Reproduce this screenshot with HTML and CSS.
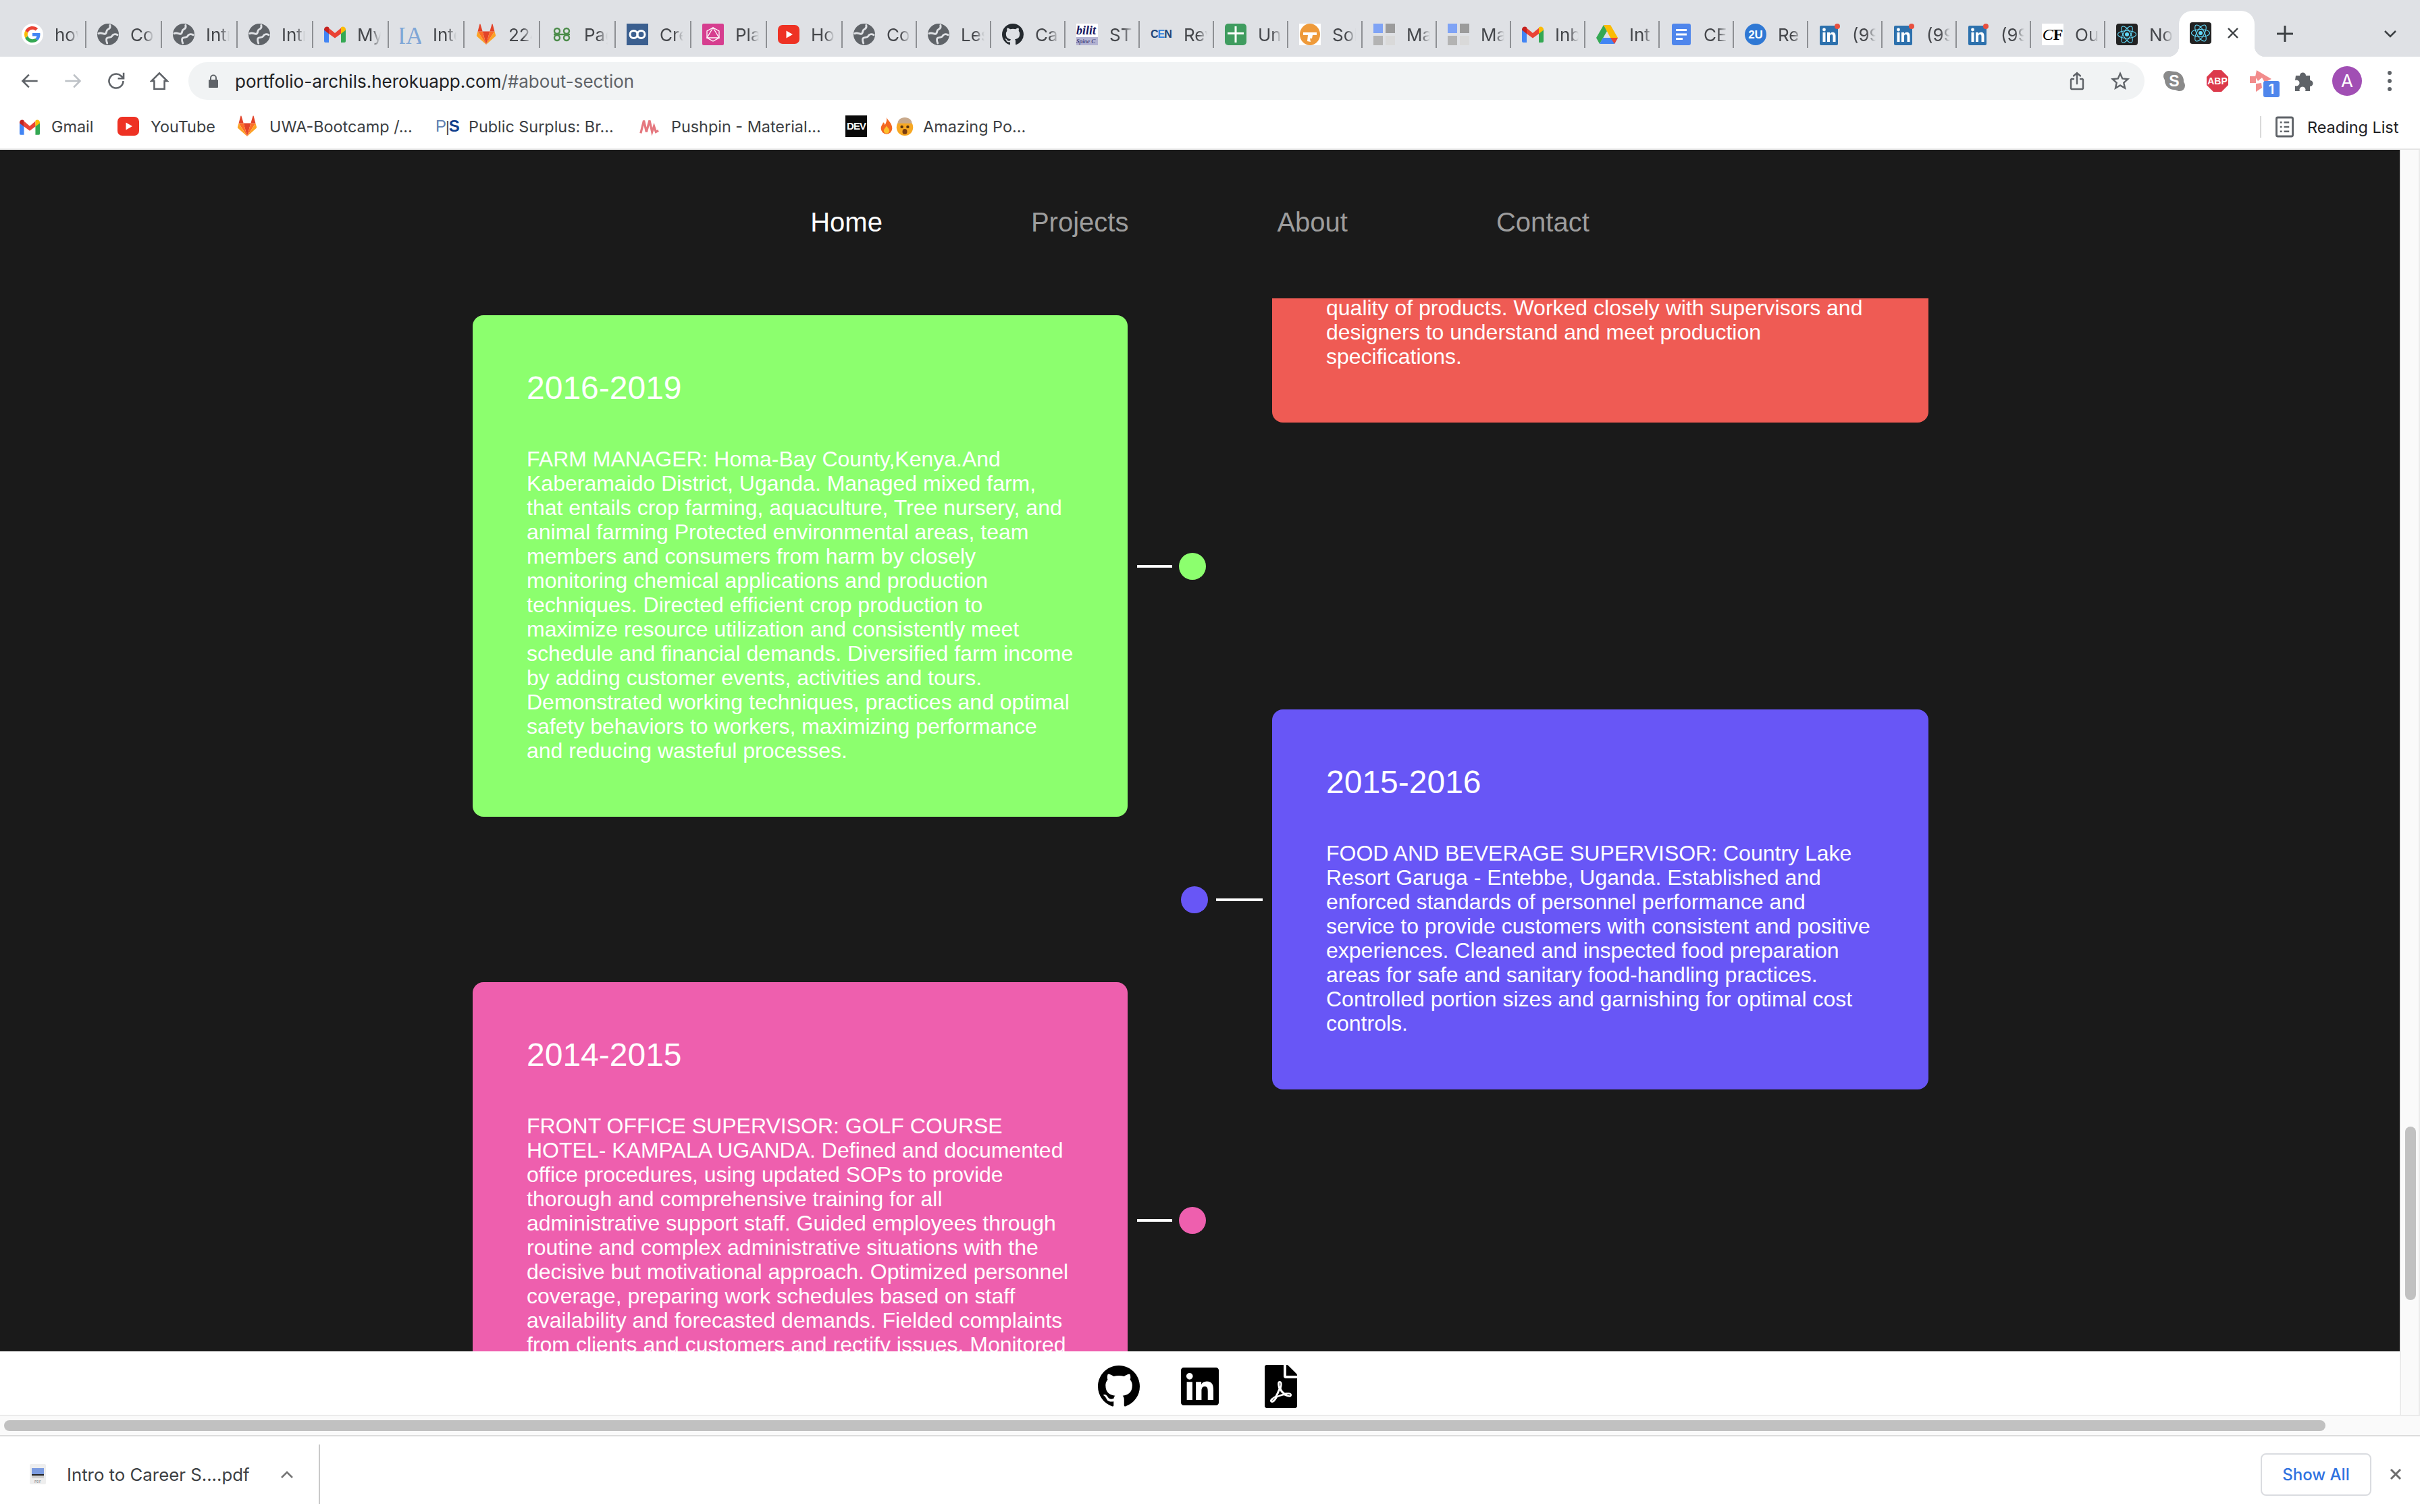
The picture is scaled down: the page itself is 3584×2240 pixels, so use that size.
FILE: index.html
```html
<!DOCTYPE html>
<html lang="en">
<head>
    <meta charset="UTF-8">
    <meta name="viewport" content="width=device-width, initial-scale=1.0">
    <title>Portfolio</title>
    <link rel="stylesheet" href="styles.css">
</head>
<body>
    <svg class="defs" width="0" height="0">
        <symbol id="i-google" viewBox="-8 -8 64 64">
            <circle cx="24" cy="24" r="32" fill="#fff"/>
            <path fill="#EA4335" d="M24 9.5c3.54 0 6.71 1.22 9.21 3.6l6.85-6.85C35.9 2.38 30.47 0 24 0 14.62 0 6.51 5.38 2.56 13.22l7.98 6.19C12.43 13.72 17.74 9.5 24 9.5z"/>
            <path fill="#4285F4" d="M46.98 24.55c0-1.57-.15-3.09-.38-4.55H24v9.02h12.94c-.58 2.96-2.26 5.48-4.78 7.18l7.73 6c4.51-4.18 7.09-10.36 7.09-17.65z"/>
            <path fill="#FBBC05" d="M10.53 28.59c-.48-1.45-.76-2.99-.76-4.59s.27-3.14.76-4.59l-7.98-6.19C.92 16.46 0 20.12 0 24c0 3.88.92 7.54 2.56 10.78l7.97-6.19z"/>
            <path fill="#34A853" d="M24 48c6.48 0 11.93-2.13 15.89-5.81l-7.73-6c-2.15 1.45-4.92 2.3-8.16 2.3-6.26 0-11.57-4.22-13.47-9.91l-7.98 6.19C6.51 42.62 14.62 48 24 48z"/>
        </symbol>
        <symbol id="i-globe" viewBox="0 0 24 24">
            <circle cx="12" cy="12" r="12" fill="currentColor"/>
            <path fill="none" stroke="#dfe1e5" stroke-width="2.2" stroke-linecap="round" d="M1.5 11c3-1.500 5 .8 7 .4 2.800-.6.600-3.700 3.400-5 2-.9 2.800-2.400 2.200-4.600"/>
            <path fill="none" stroke="#dfe1e5" stroke-width="2.200" stroke-linecap="round" d="M22.500 12.500c-2.500-1.200-5-.8-6 1.200-1 2.200-3.500 1-5.500 2.300-1.200.8-1.200 2.600 0 5.800"/>
        </symbol>
        <symbol id="i-gmail" viewBox="0 0 32 24">
            <path fill="#4285f4" d="M0 4v18a2 2 0 0 0 2 2h5V8z"/>
            <path fill="#34a853" d="M25 8v16h5a2 2 0 0 0 2-2V4z"/>
            <path fill="#ea4335" d="M7 2.500 16 10l9-7.500V11l-9 6.500L7 11z"/>
            <path fill="#c5221f" d="M0 4.500C0 1 4.200-1 7 1.500V11L0 5.500z"/>
            <path fill="#fbbc04" d="M25 1.500C27.800-1 32 1 32 4.500v1L25 11z"/>
        </symbol>
        <symbol id="i-gitlab" viewBox="0 0 32 36">
            <path fill="#e24329" d="M16 35 10 13h12z"/>
            <path fill="#fc6d26" d="M16 35 10 13H2z"/>
            <path fill="#fca326" d="M2 13 .2 19c-.3 1 .1 2 .9 2.600L16 35z"/>
            <path fill="#e24329" d="M2 13h8L6.500 1c-.2-.7-1.200-.7-1.400 0z"/>
            <path fill="#fc6d26" d="M16 35l6-22h8z"/>
            <path fill="#fca326" d="M30 13l1.800 6c.3 1-.1 2-.9 2.600L16 35z"/>
            <path fill="#e24329" d="M30 13h-8L25.500 1c.2-.7 1.200-.7 1.400 0z"/>
        </symbol>
        <symbol id="i-youtube" viewBox="0 0 32 32">
            <rect y="2" width="32" height="28" rx="7" fill="#ee3224"/>
            <path fill="#fff" d="M12.500 10.500 22 16l-9.500 5.500z"/>
        </symbol>
        <symbol id="i-github" viewBox="0 0 16 16">
            <path fill="currentColor" d="M8 0C3.58 0 0 3.58 0 8c0 3.540 2.290 6.530 5.470 7.590.4.070.55-.17.55-.38 0-.19-.01-.82-.01-1.490-2.010.37-2.530-.49-2.690-.94-.09-.23-.48-.94-.82-1.130-.28-.15-.68-.52-.01-.53.63-.01 1.080.58 1.230.82.72 1.210 1.870.87 2.330.66.07-.52.28-.87.51-1.070-1.780-.2-3.640-.89-3.640-3.950 0-.87.31-1.590.82-2.150-.08-.2-.36-1.020.08-2.120 0 0 .67-.21 2.200.82.64-.18 1.320-.27 2-.27.68 0 1.360.09 2 .27 1.530-1.040 2.200-.82 2.200-.82.44 1.100.16 1.920.08 2.120.51.56.82 1.270.82 2.150 0 3.070-1.870 3.750-3.650 3.950.29.25.54.73.54 1.480 0 1.070-.01 1.930-.01 2.200 0 .21.15.46.55.38A8.013 8.013 0 0016 8c0-4.420-3.580-8-8-8z"/>
        </symbol>
        <symbol id="i-linkedin" viewBox="0 0 32 32">
            <rect x="1" y="3" width="27" height="29" rx="2" fill="#2d71ad"/>
            <rect x="5.500" y="13" width="4" height="14" fill="#fff"/>
            <circle cx="7.500" cy="9" r="2.400" fill="#fff"/>
            <path fill="#fff" d="M12 13h4v2c1-1.500 2.400-2.300 4-2.300 3.300 0 4.500 2.200 4.500 5.300v9h-4v-8c0-1.700-.5-3-2.200-3-1.800 0-2.300 1.300-2.300 3v8h-4z"/>
            <circle cx="27" cy="4" r="4" fill="#e8503f"/>
        </symbol>
        <symbol id="i-grid" viewBox="0 0 32 32">
            <rect width="14" height="14" fill="#7fa3f5"/>
            <rect x="18" width="14" height="14" fill="#9b9b9b"/>
            <rect y="18" width="14" height="14" fill="#b3b3b3"/>
            <rect x="18" y="18" width="14" height="14" fill="#d9d9d9"/>
        </symbol>
        <symbol id="i-react" viewBox="0 0 32 32">
            <rect width="32" height="32" rx="4" fill="#222"/>
            <circle cx="16" cy="16" r="3" fill="#61dafb"/>
            <g fill="none" stroke="#61dafb" stroke-width="1.100">
                <ellipse cx="16" cy="16" rx="13.500" ry="5.500"/>
                <ellipse cx="16" cy="16" rx="13.500" ry="5.500" transform="rotate(60 16 16)"/>
                <ellipse cx="16" cy="16" rx="13.500" ry="5.500" transform="rotate(120 16 16)"/>
            </g>
        </symbol>
    </svg>

    <div class="tabstrip">
        <div class="tab tab-wide"><svg class="fav"><use href="#i-google"/></svg><span class="tab-title">how</span></div>
        <div class="tab tab-wide"><svg class="fav globe"><use href="#i-globe"/></svg><span class="tab-title">Cor</span></div>
        <div class="tab tab-wide"><svg class="fav globe"><use href="#i-globe"/></svg><span class="tab-title">Intr</span></div>
        <div class="tab tab-wide"><svg class="fav globe"><use href="#i-globe"/></svg><span class="tab-title">Intr</span></div>
        <div class="tab tab-wide"><svg class="fav"><use href="#i-gmail"/></svg><span class="tab-title">My</span></div>
        <div class="tab tab-wide"><svg class="fav" viewBox="0 0 32 32"><text x="16" y="30" class="fav-ia">IA</text></svg><span class="tab-title">Inte</span></div>
        <div class="tab tab-wide"><svg class="fav"><use href="#i-gitlab"/></svg><span class="tab-title">224</span></div>
        <div class="tab tab-wide"><svg class="fav" viewBox="0 0 32 32"><g fill="none" stroke="#4c8c4a" stroke-width="2.400"><circle cx="9" cy="11" r="4"/><circle cx="23" cy="11" r="4"/><circle cx="9" cy="21" r="4"/><circle cx="23" cy="21" r="4"/><path d="M4 16h24"/></g></svg><span class="tab-title">Pag</span></div>
        <div class="tab tab-wide"><svg class="fav" viewBox="0 0 32 32"><rect width="32" height="32" fill="#3b5f8f"/><g fill="none" stroke="#fff" stroke-width="3"><circle cx="10.500" cy="16" r="5.500"/><circle cx="21.500" cy="16" r="5.500"/></g></svg><span class="tab-title">Cre</span></div>
        <div class="tab tab-wide"><svg class="fav" viewBox="0 0 32 32"><rect width="32" height="32" rx="2" fill="#d63e8f"/><g fill="none" stroke="#fff" stroke-width="1.300"><path d="M16 6 25 21H7z"/><path d="M16 6 7 11v10l9 5 9-5V11z"/></g></svg><span class="tab-title">Pla</span></div>
        <div class="tab tab-wide"><svg class="fav"><use href="#i-youtube"/></svg><span class="tab-title">Hov</span></div>
        <div class="tab"><svg class="fav globe"><use href="#i-globe"/></svg><span class="tab-title">Co</span></div>
        <div class="tab"><svg class="fav globe"><use href="#i-globe"/></svg><span class="tab-title">Les</span></div>
        <div class="tab"><svg class="fav gh" viewBox="0 0 16 16"><use href="#i-github"/></svg><span class="tab-title">Ca</span></div>
        <div class="tab"><div class="fav fav-ability"><span class="ability-top">bilit</span><span class="ability-bot">Spine C</span></div><span class="tab-title">ST</span></div>
        <div class="tab"><span class="fav fav-cen">C<b>E</b>N</span><span class="tab-title">Rev</span></div>
        <div class="tab"><svg class="fav" viewBox="0 0 32 32"><rect width="32" height="32" rx="5" fill="#3f9c5f"/><path fill="#fff" d="M14.500 4h3v9H28v3H17.500v12h-3V16H4v-3h10.500z"/></svg><span class="tab-title">Un</span></div>
        <div class="tab"><svg class="fav" viewBox="0 0 32 32"><rect width="32" height="32" fill="#fff"/><ellipse cx="16" cy="16" rx="15" ry="16" fill="#ee9a3a"/><path fill="#fff" d="M6 13h20v4h-6l-1 5h-3l1 5-5-1 1-9H6z"/></svg><span class="tab-title">Sol</span></div>
        <div class="tab"><svg class="fav"><use href="#i-grid"/></svg><span class="tab-title">Ma</span></div>
        <div class="tab"><svg class="fav"><use href="#i-grid"/></svg><span class="tab-title">Ma</span></div>
        <div class="tab"><svg class="fav"><use href="#i-gmail"/></svg><span class="tab-title">Inb</span></div>
        <div class="tab"><svg class="fav" viewBox="0 0 32 28"><path fill="#34a853" d="M11 0 0 19l5 9L16 9z"/><path fill="#fbbc04" d="M11 0h10l11 19H21z"/><path fill="#4285f4" d="M32 19H10L5 28h22z"/><path fill="#ea4335" d="M32 19H21l6 9z"/></svg><span class="tab-title">Int</span></div>
        <div class="tab"><svg class="fav" viewBox="0 0 32 32"><rect x="2" width="28" height="32" rx="3" fill="#4f86ec"/><path fill="#fff" d="M8 8h16v3H8zM8 14.500h16v3H8zM8 21h10v3H8z"/></svg><span class="tab-title">CE</span></div>
        <div class="tab"><svg class="fav" viewBox="0 0 32 32"><circle cx="16" cy="16" r="16" fill="#2f78d4"/><text x="16" y="22" class="fav-2u">2U</text></svg><span class="tab-title">Re</span></div>
        <div class="tab"><svg class="fav"><use href="#i-linkedin"/></svg><span class="tab-title">(99</span></div>
        <div class="tab"><svg class="fav"><use href="#i-linkedin"/></svg><span class="tab-title">(99</span></div>
        <div class="tab"><svg class="fav"><use href="#i-linkedin"/></svg><span class="tab-title">(99</span></div>
        <div class="tab"><span class="fav fav-cf"><i>C</i><b>F</b></span><span class="tab-title">Ou</span></div>
        <div class="tab tab-last"><svg class="fav"><use href="#i-react"/></svg><span class="tab-title">No</span></div>
        <div class="tab-active">
            <svg class="fav"><use href="#i-react"/></svg>
            <svg class="tab-close" viewBox="0 0 16 16"><path d="M1 1l14 14M15 1 1 15"/></svg>
        </div>
        <svg class="new-tab" viewBox="0 0 24 24"><path d="M12 1v22M1 12h22"/></svg>
        <svg class="tab-menu" viewBox="0 0 18 12"><path d="M1 2l8 8 8-8"/></svg>
    </div>

    <div class="toolbar">
        <div class="nav-buttons">
            <svg class="tool" viewBox="0 0 24 24"><path d="M22 12H3M11 4l-8 8 8 8"/></svg>
            <svg class="tool tool-off" viewBox="0 0 24 24"><path d="M2 12h19M13 4l8 8-8 8"/></svg>
            <svg class="tool" viewBox="0 0 24 24"><path d="M21 12a9 9 0 1 1-3-6.700L21 8M21.500 1.500v7.300h-7.300"/></svg>
            <svg class="tool" viewBox="0 0 24 24"><path d="M12 2 2 12h3.500v10h13V12H22z"/></svg>
        </div>
        <div class="omnibox">
            <svg class="lock" viewBox="0 0 16 20"><path fill="#5f6368" d="M3 8V5.500a5 5 0 0 1 10 0V8h1a1 1 0 0 1 1 1v10a1 1 0 0 1-1 1H2a1 1 0 0 1-1-1V9a1 1 0 0 1 1-1zm2 0h6V5.500a3 3 0 0 0-6 0z"/></svg>
            <span class="url">portfolio-archils.herokuapp.com<span class="url-path">/#about-section</span></span>
            <svg class="omni-icon" viewBox="0 0 24 28"><path d="M7 11H4a1.500 1.500 0 0 0-1 1v13a1.500 1.500 0 0 0 1 1h16a1.500 1.500 0 0 0 1-1V12a1.500 1.500 0 0 0-1-1h-3M12 18V2M7 6.500 12 2l5 4.500"/></svg>
            <svg class="omni-icon omni-star" viewBox="0 0 28 28"><path d="M14 3l3.300 7.400 8 .8-6 5.400 1.700 7.900-7-4-7 4 1.700-7.900-6-5.400 8-.8z"/></svg>
        </div>
        <div class="extensions">
            <svg class="ext" viewBox="0 0 32 32"><path fill="#8a8a8a" d="M16 2a14 14 0 0 1 14 15c0 1 2 2 2 6a8 8 0 0 1-8 8c-4 0-5-2-8-2A14 14 0 0 1 2 15c0-1-2-3-2-6a8 8 0 0 1 8-8c3 0 5 1 8 1z"/><text x="16" y="24" class="ext-s">S</text></svg>
            <svg class="ext" viewBox="0 0 32 32"><path fill="#dc3a4b" d="M10 0h12l10 10v12L22 32H10L0 22V10z"/><text x="16" y="21" class="ext-abp">ABP</text></svg>
            <div class="ext ext-badged">
                <svg viewBox="0 0 32 32"><path fill="#f28c8c" d="M10 0 32 13 22 18l-4-7-6 5-4-6zM0 9h9v10H0zM9 20l8-1 1 7-9 6z"/></svg>
                <span class="badge">1</span>
            </div>
            <svg class="ext" viewBox="0 0 32 32"><path fill="#5f6368" d="M4 8h6a4.500 4.500 0 1 1 9 0h6v7a4.500 4.500 0 1 1 0 9v7h-7a4.500 4.500 0 1 0-8 0H3v-8a4.500 4.500 0 1 0 0-8z"/></svg>
            <div class="avatar">A</div>
            <div class="kebab"><i></i><i></i><i></i></div>
        </div>
    </div>

    <div class="bookmarks">
        <a class="bookmark bm-gmail"><svg class="bm-icon"><use href="#i-gmail"/></svg>Gmail</a>
        <a class="bookmark bm-yt"><svg class="bm-icon"><use href="#i-youtube"/></svg>YouTube</a>
        <a class="bookmark bm-lab"><svg class="bm-icon"><use href="#i-gitlab"/></svg>UWA-Bootcamp /...</a>
        <a class="bookmark bm-ps"><span class="bm-icon ps-icon">P<i>|</i><b>S</b></span>Public Surplus: Br...</a>
        <a class="bookmark bm-pin"><svg class="bm-icon" viewBox="0 0 32 32"><path fill="none" stroke="#e5787f" stroke-width="3.500" d="M2 27 7 7l4 18 5-18 4 18 3-9 3 9 4-2"/></svg>Pushpin - Material...</a>
        <a class="bookmark bm-dev"><span class="bm-icon dev-icon">DEV</span>
            <svg class="emoji emoji-fire" viewBox="0 0 24 32"><path fill="#f4671f" d="M12 0c2 6 10 10 10 20a10 10 0 0 1-20 0c0-5 3-7 4-11 2 1 3 3 3 5 2-4 4-8 3-14z"/><path fill="#fbc02d" d="M12 15c1 3 5 5 5 9a5 5 0 0 1-10 0c0-3 3-5 5-9z"/></svg>
            <svg class="emoji emoji-head" viewBox="0 0 32 32"><circle cx="16" cy="18" r="14" fill="#f7a823"/><path fill="#c8a98c" d="M4 11c0-6 5-10 12-10s12 4 12 10z"/><circle cx="11" cy="17" r="2.500" fill="#5a3310"/><circle cx="21" cy="17" r="2.500" fill="#5a3310"/><ellipse cx="16" cy="25" rx="4" ry="4.500" fill="#7a3d10"/></svg>
            Amazing Po...</a>
        <div class="reading-list">
            <svg class="reading-icon" viewBox="0 0 28 32"><rect x="1.500" y="1.500" width="25" height="29" rx="2" fill="none" stroke="#5f6368" stroke-width="3"/><path stroke="#5f6368" stroke-width="2.500" d="M7 9h3M13 9h8M7 16h3M13 16h8M7 23h3M13 23h8"/></svg>
            Reading List
        </div>
    </div>

    <div class="viewport">
        <div class="page">
            <nav class="site-nav">
                <a class="active">Home</a>
                <a>Projects</a>
                <a>About</a>
                <a>Contact</a>
            </nav>
            <main class="timeline">
                <div class="timeline-inner">
                    <div class="row row-right row-first">
                        <article class="card card-red card-cut">
                            <p>quality of products. Worked closely with supervisors and designers to understand and meet production specifications.</p>
                        </article>
                    </div>
                    <div class="row row-left">
                        <article class="card card-green">
                            <h3>2016-2019</h3>
                            <p>FARM MANAGER: Homa-Bay County,Kenya.And Kaberamaido District, Uganda. Managed mixed farm, that entails crop farming, aquaculture, Tree nursery, and animal farming Protected environmental areas, team members and consumers from harm by closely monitoring chemical applications and production techniques. Directed efficient crop production to maximize resource utilization and consistently meet schedule and financial demands. Diversified farm income by adding customer events, activities and tours. Demonstrated working techniques, practices and optimal safety behaviors to workers, maximizing performance and reducing wasteful processes.</p>
                        </article>
                        <span class="stem"></span>
                        <span class="dot dot-green"></span>
                    </div>
                    <div class="row row-right">
                        <span class="dot dot-purple"></span>
                        <span class="stem stem-right"></span>
                        <article class="card card-purple">
                            <h3>2015-2016</h3>
                            <p>FOOD AND BEVERAGE SUPERVISOR: Country Lake Resort Garuga - Entebbe, Uganda. Established and enforced standards of personnel performance and service to provide customers with consistent and positive experiences. Cleaned and inspected food preparation areas for safe and sanitary food-handling practices. Controlled portion sizes and garnishing for optimal cost controls.</p>
                        </article>
                    </div>
                    <div class="row row-left">
                        <article class="card card-pink">
                            <h3>2014-2015</h3>
                            <p>FRONT OFFICE SUPERVISOR: GOLF COURSE HOTEL- KAMPALA UGANDA. Defined and documented office procedures, using updated SOPs to provide thorough and comprehensive training for all administrative support staff. Guided employees through routine and complex administrative situations with the decisive but motivational approach. Optimized personnel coverage, preparing work schedules based on staff availability and forecasted demands. Fielded complaints from clients and customers and rectify issues. Monitored</p>
                        </article>
                        <span class="stem"></span>
                        <span class="dot dot-pink"></span>
                    </div>
                </div>
            </main>
            <footer class="site-footer">
                <a class="social"><svg class="social-gh" viewBox="0 0 16 16"><use href="#i-github"/></svg></a>
                <a class="social"><svg class="social-in" viewBox="0 32 448 448"><path d="M416 32H31.900C14.300 32 0 46.500 0 64.300v383.400C0 465.500 14.300 480 31.900 480H416c17.600 0 32-14.500 32-32.300V64.300c0-17.800-14.400-32.300-32-32.300zM135.400 416H69V202.200h66.500V416zm-33.200-243c-21.300 0-38.500-17.300-38.500-38.500S80.900 96 102.200 96c21.200 0 38.500 17.300 38.500 38.500 0 21.300-17.200 38.500-38.500 38.500zm282.100 243h-66.400V312c0-24.800-.5-56.700-34.500-56.700-34.600 0-39.900 27-39.900 54.900V416h-66.400V202.200h63.700v29.200h.9c8.900-16.800 30.600-34.500 62.900-34.500 67.200 0 79.700 44.300 79.700 101.900V416z"/></svg></a>
                <a class="social"><svg class="social-pdf" viewBox="0 0 384 512"><path d="M181.900 256.100c-5-16-4.900-46.900-2-46.900 8.400 0 7.600 36.900 2 46.900zm-1.700 47.200c-7.700 20.200-17.300 43.300-28.400 62.700 18.300-7 39-17.200 62.900-21.900-12.700-9.600-24.900-23.400-34.500-40.800zM86.100 428.100c0 .8 13.200-5.400 34.900-40.200-6.700 6.300-29.100 24.500-34.900 40.200zM248 160h136v328c0 13.300-10.700 24-24 24H24c-13.300 0-24-10.700-24-24V24C0 10.700 10.700 0 24 0h200v136c0 13.200 10.800 24 24 24zm-8 171.800c-20-12.200-33.300-29-42.700-53.800 4.500-18.500 11.600-46.600 6.200-64.200-4.700-29.400-42.400-26.500-47.800-6.800-5 18.300-.4 44.100 8.100 77-11.600 27.600-28.700 64.600-40.800 85.800-.1 0-.1.1-.2.1-27.100 13.900-73.600 44.500-54.500 68 5.600 6.900 16 10 21.500 10 17.900 0 35.700-18 61.100-61.800 25.800-8.500 54.100-19.100 79-23.200 21.700 11.800 47.100 19.500 64 19.500 29.200 0 31.200-32 19.700-43.400-13.900-13.600-54.300-9.700-73.600-7.200zM377 105L279 7c-4.500-4.500-10.600-7-17-7h-6v128h128v-6.100c0-6.300-2.500-12.400-7-16.900zm-74.100 255.300c4.100-2.700-2.500-11.900-42.800-9 37.100 15.800 42.800 9 42.800 9z"/></svg></a>
            </footer>
        </div>
        <div class="vscroll"><div class="vscroll-thumb"></div></div>
    </div>
    <div class="hscroll"><div class="hscroll-thumb"></div></div>

    <div class="downloads">
        <div class="download-item">
            <div class="pdf-file"><span class="pdf-thumb"></span><span class="pdf-label">PDF</span></div>
            <span class="download-name">Intro to Career S....pdf</span>
            <svg class="download-caret" viewBox="0 0 20 12"><path d="M2 11l8-8 8 8"/></svg>
        </div>
        <button class="show-all">Show All</button>
        <svg class="download-close" viewBox="0 0 18 18"><path d="M2 2l14 14M16 2 2 16"/></svg>
    </div>
</body>
</html>
```

FILE: styles.css
```css
* {
    box-sizing: border-box;
}
html, body {
    margin: 0;
    padding: 0;
    height: 2240px;
    overflow: hidden;
}
body {
    display: flex;
    flex-direction: column;
    font-family: 'Inter', 'Liberation Sans', sans-serif;
    background: #fff;
}
.defs {
    position: absolute;
}

/* tab strip */
.tabstrip {
    height: 84px;
    flex: none;
    display: flex;
    padding: 16px 0 0 16px;
    background: #dfe1e5;
    position: relative;
}
.tab {
    width: 110px;
    height: 40px;
    margin-top: 15px;
    flex: none;
    display: flex;
    align-items: center;
    border-right: 2px solid #8e9094;
    padding-left: 16px;
    font-size: 26px;
    color: #45474b;
}
.tab-wide {
    width: 112px;
}
.tab-last {
    width: 109px;
    border-right: none;
}
.fav {
    width: 32px;
    height: 32px;
    flex: none;
    margin-right: 17px;
    overflow: hidden;
}
.tab-title {
    width: 35px;
    overflow: hidden;
    white-space: nowrap;
    -webkit-mask-image: linear-gradient(to right, #000 60%, transparent);
    mask-image: linear-gradient(to right, #000 60%, transparent);
}
.globe {
    color: #5f6368;
}
.gh {
    color: #24292e;
}
.fav-ia {
    font: 36px 'Liberation Serif', serif;
    fill: #7fa6d6;
    text-anchor: middle;
}
.fav-2u {
    font: bold 17px 'Liberation Sans', sans-serif;
    fill: #fff;
    text-anchor: middle;
}
.fav-ability {
    display: flex;
    flex-direction: column;
    background: #fff;
    font-family: 'Liberation Serif', serif;
    font-style: italic;
    color: #17175f;
    white-space: nowrap;
}
.ability-top {
    height: 20px;
    font-size: 18px;
    font-weight: bold;
    line-height: 20px;
}
.ability-bot {
    height: 12px;
    font-size: 9px;
    line-height: 12px;
    background: #b3b3d2;
}
.fav-cen {
    font: bold 16px/32px 'Liberation Sans', sans-serif;
    color: #1d4478;
    letter-spacing: -1px;
    white-space: nowrap;
}
.fav-cen b {
    color: #2f80e0;
}
.fav-cf {
    background: #fff;
    color: #000;
    font: 24px/32px 'Liberation Serif', serif;
    text-align: center;
    white-space: nowrap;
}
.tab-active {
    position: relative;
    width: 112px;
    height: 68px;
    flex: none;
    display: flex;
    align-items: center;
    padding: 0 0 2px 16px;
    background: #fff;
    border-radius: 20px 20px 0 0;
}
.tab-active::before,
.tab-active::after {
    content: "";
    position: absolute;
    bottom: 0;
    width: 16px;
    height: 16px;
}
.tab-active::before {
    left: -16px;
    background: radial-gradient(circle at 0 0, transparent 16px, #fff 16.500px);
}
.tab-active::after {
    right: -16px;
    background: radial-gradient(circle at 100% 0, transparent 16px, #fff 16.500px);
}
.tab-active .fav {
    margin-right: 24px;
}
.tab-close {
    width: 16px;
    height: 16px;
    fill: none;
    stroke: #3c4043;
    stroke-width: 2.400;
}
.new-tab {
    position: absolute;
    left: 3372px;
    top: 38px;
    width: 24px;
    height: 24px;
    fill: none;
    stroke: #3c4043;
    stroke-width: 3;
    stroke-linecap: round;
}
.tab-menu {
    position: absolute;
    left: 3531px;
    top: 44px;
    width: 18px;
    height: 12px;
    fill: none;
    stroke: #3c4043;
    stroke-width: 2.500;
}

/* toolbar */
.toolbar {
    height: 72px;
    flex: none;
    display: flex;
    align-items: flex-start;
    padding-top: 8px;
    background: #fff;
}
.nav-buttons {
    width: 279px;
    flex: none;
    height: 56px;
    display: flex;
    align-items: center;
    padding-left: 30px;
    gap: 36px;
}
.tool {
    width: 28px;
    height: 28px;
    fill: none;
    stroke: #5f6368;
    stroke-width: 2.200;
}
.tool-off {
    stroke: #bdc1c6;
}
.omnibox {
    width: 2897px;
    height: 56px;
    flex: none;
    display: flex;
    align-items: center;
    background: #f1f3f4;
    border-radius: 28px;
    padding-left: 29px;
}
.lock {
    width: 16px;
    height: 20px;
    margin-right: 24px;
}
.url {
    flex: 1;
    font-size: 26px;
    color: #202124;
    white-space: nowrap;
}
.url-path {
    color: #5f6368;
}
.omni-icon {
    width: 24px;
    height: 28px;
    margin-right: 37px;
    fill: none;
    stroke: #5f6368;
    stroke-width: 2.400;
    stroke-linecap: round;
}
.omni-star {
    width: 30px;
    margin-right: 21px;
}
.extensions {
    height: 56px;
    display: flex;
    align-items: center;
    padding-left: 28px;
    gap: 32px;
}
.ext {
    width: 32px;
    height: 32px;
    flex: none;
}
.ext-s {
    font: bold 23px 'Liberation Sans', sans-serif;
    fill: #fff;
    text-anchor: middle;
}
.ext-abp {
    font: bold 14px 'Liberation Sans', sans-serif;
    fill: #fff;
    text-anchor: middle;
}
.ext-badged {
    position: relative;
}
.badge {
    position: absolute;
    left: 20px;
    top: 16px;
    width: 24px;
    height: 24px;
    background: #4f86ec;
    border-radius: 3px;
    color: #fff;
    font-size: 20px;
    font-weight: 600;
    line-height: 24px;
    text-align: center;
}
.avatar {
    width: 44px;
    height: 44px;
    flex: none;
    margin-left: -6px;
    border-radius: 50%;
    background: #a14fb4;
    color: #fff;
    font-size: 26px;
    line-height: 44px;
    text-align: center;
}
.kebab {
    display: flex;
    flex-direction: column;
    gap: 6px;
    margin-left: -6px;
    padding-left: 12px;
}
.kebab i {
    width: 6px;
    height: 6px;
    border-radius: 50%;
    background: #5f6368;
}

/* bookmarks */
.bookmarks {
    height: 66px;
    flex: none;
    display: flex;
    align-items: center;
    padding: 0 0 2px 29px;
    background: #fff;
    border-bottom: 2px solid #e4e4e4;
    font-size: 23.4px;
    color: #3c4043;
}
.bookmark {
    display: flex;
    align-items: center;
    flex: none;
    white-space: nowrap;
}
.bm-gmail {
    width: 145px;
}
.bm-yt {
    width: 176px;
}
.bm-lab {
    width: 295px;
}
.bm-ps {
    width: 302px;
}
.bm-pin {
    width: 305px;
}
.bm-icon {
    width: 32px;
    height: 32px;
    margin-right: 17px;
    flex: none;
}
.bm-gmail .bm-icon {
    width: 30px;
    height: 23px;
    margin-top: 2px;
}
.bm-pin .bm-icon {
    width: 30px;
}
.ps-icon {
    font: 24px/32px 'Liberation Sans', sans-serif;
    color: #5f7fb0;
    white-space: nowrap;
    letter-spacing: -1px;
}
.ps-icon i {
    font-style: normal;
    color: #444;
    font-size: 22px;
}
.ps-icon b {
    color: #123f8c;
}
.dev-icon {
    background: #0a0a0a;
    color: #fff;
    font: bold 15px/32px 'Liberation Sans', sans-serif;
    letter-spacing: -1px;
    text-align: center;
    margin-right: 19px;
}
.emoji {
    height: 32px;
    flex: none;
}
.emoji-fire {
    width: 20px;
    margin-right: 3px;
}
.emoji-head {
    width: 28px;
    margin-right: 13px;
}
.reading-list {
    position: absolute;
    left: 3347px;
    top: 172px;
    height: 32px;
    display: flex;
    align-items: center;
    padding-left: 21px;
    border-left: 2px solid #d9d9d9;
    color: #202124;
    white-space: nowrap;
}
.reading-icon {
    width: 27px;
    height: 32px;
    margin-right: 20px;
}

/* page area */
.viewport {
    height: 1874px;
    flex: none;
    display: flex;
}
.page {
    width: 3554px;
    flex: none;
    display: flex;
    flex-direction: column;
    background: #1a1a1a;
}
.site-nav {
    height: 220px;
    flex: none;
    display: flex;
    justify-content: center;
    align-items: center;
    gap: 220px;
    padding-bottom: 5px;
    font-family: 'Liberation Sans', sans-serif;
    font-size: 40px;
    color: #9d9d9d;
}
.site-nav .active {
    color: #fff;
}
.timeline {
    flex: 1;
    overflow: hidden;
    min-height: 0;
}
.timeline-inner {
    width: 2156px;
    margin-left: 700px;
    font-family: 'Liberation Sans', sans-serif;
    color: #fff;
}
.row {
    display: flex;
    align-items: center;
    margin-top: -159px;
}
.row-right {
    justify-content: flex-end;
}
.row-right .card {
    width: 972px;
}
.row-first {
    margin-top: -4px;
}
.card {
    width: 970px;
    flex: none;
    padding: 80px;
    border-radius: 16px;
}
.card h3 {
    margin: 0 0 60px;
    font-size: 48px;
    font-weight: 400;
    line-height: 55px;
}
.card p {
    margin: 0;
    font-size: 32px;
    line-height: 36px;
}
.card-cut {
    padding-top: 0;
    border-radius: 0 0 16px 16px;
}
.card-red {
    background: #ef5b54;
}
.card-green {
    background: #8cff6e;
}
.card-purple {
    background: #6856f6;
}
.card-pink {
    background: #ee5fae;
    min-height: 706px;
}
.stem {
    width: 52px;
    height: 4px;
    margin: 0 10px 0 14px;
    background: #fff;
}
.stem-right {
    width: 69px;
    margin: 0 14px 0 12px;
}
.dot {
    width: 40px;
    height: 40px;
    border-radius: 50%;
}
.dot-green {
    background: #8cff6e;
}
.dot-purple {
    background: #6856f6;
}
.dot-pink {
    background: #ee5fae;
}
.site-footer {
    height: 94px;
    flex: none;
    display: flex;
    justify-content: center;
    align-items: center;
    padding-top: 9px;
    background: #fff;
}
.social {
    width: 120px;
    display: flex;
    justify-content: center;
    color: #000;
}
.social-gh {
    width: 62px;
    height: 62px;
}
.social-in {
    width: 56px;
    height: 56px;
}
.social-pdf {
    width: 48px;
    height: 64px;
}
.vscroll {
    flex: 1;
    background: #fafafa;
    border-left: 2px solid #ebebeb;
    border-right: 2px solid #ebebeb;
    padding: 1447px 4px 0 6px;
}
.vscroll-thumb {
    height: 257px;
    background: #c1c1c1;
    border-radius: 8px;
}
.hscroll {
    height: 32px;
    flex: none;
    padding: 8px 0 0 6px;
    background: #fafafa;
    border-top: 2px solid #ebebeb;
    border-bottom: 2px solid #dcdcdc;
}
.hscroll-thumb {
    width: 3438px;
    height: 16px;
    margin-top: -2px;
    background: #c1c1c1;
    border-radius: 8px;
}

/* download shelf */
.downloads {
    height: 112px;
    flex: none;
    display: flex;
    align-items: center;
    background: #fff;
}
.download-item {
    width: 474px;
    height: 88px;
    flex: none;
    display: flex;
    align-items: center;
    padding-left: 44px;
    border-right: 2px solid #cacaca;
}
.pdf-file {
    width: 24px;
    height: 30px;
    flex: none;
    display: flex;
    flex-direction: column;
    align-items: center;
    padding-top: 6px;
    background: #eeeeee;
    border-radius: 2px;
    margin-right: 31px;
}
.pdf-thumb {
    width: 18px;
    height: 15px;
    background: linear-gradient(#7b9be0 60%, #222 60%, #222 75%, #d0d0d0 75%);
}
.pdf-label {
    font-size: 5px;
    color: #777;
    margin-top: 2px;
}
.download-name {
    font-size: 25.8px;
    color: #3c4043;
    white-space: nowrap;
    width: 316px;
}
.download-caret {
    width: 20px;
    height: 12px;
    fill: none;
    stroke: #747474;
    stroke-width: 2.600;
}
.show-all {
    width: 164px;
    height: 63px;
    margin-left: 2874px;
    flex: none;
    background: #fff;
    border: 2px solid #dadce0;
    border-radius: 8px;
    font-family: 'Inter', 'Liberation Sans', sans-serif;
    font-size: 24px;
    font-weight: 500;
    color: #2f72e0;
    padding: 0;
}
.download-close {
    width: 18px;
    height: 18px;
    margin-left: 27px;
    fill: none;
    stroke: #6d6d6d;
    stroke-width: 3;
}
```
